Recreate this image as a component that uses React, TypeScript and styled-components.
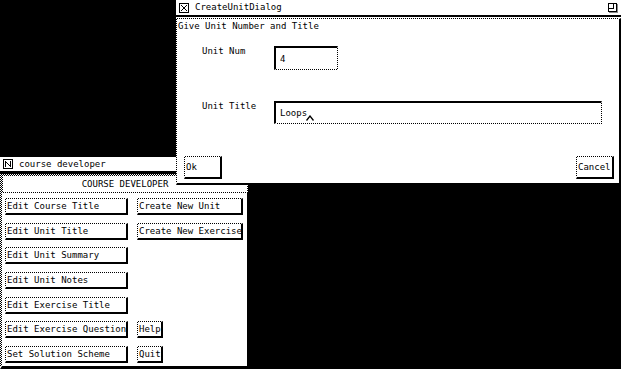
import React from 'react';
import styled, { createGlobalStyle } from 'styled-components';

const GlobalStyle = createGlobalStyle`
  html, body {
    margin: 0;
    padding: 0;
    background: #000;
  }
  body {
    font-family: "DejaVu Sans Mono", "Liberation Mono", monospace;
    font-size: 9px;
    color: #000;
  }
`;

// 1px checkerboard, the way the old mono server draws a light shadow
const dither = 'repeating-conic-gradient(#000 0% 25%, #fff 0% 50%) 0 0 / 2px 2px';

const Desktop = styled.div`
  position: relative;
  width: 621px;
  height: 369px;
  overflow: hidden;
  background: #000;
`;

const Window = styled.section<{ $x: number; $y: number; $w: number; $h: number }>`
  position: absolute;
  left: ${(p) => p.$x}px;
  top: ${(p) => p.$y}px;
  width: ${(p) => p.$w}px;
  height: ${(p) => p.$h}px;
  display: flex;
  flex-direction: column;
  background: #fff;
`;

const TitleBar = styled.header<{ $h: number }>`
  height: ${(p) => p.$h}px;
  flex: none;
  display: flex;
  align-items: center;
  gap: 6px;
  padding: 0 3px;
  background: #fff;
  line-height: 11px;
  white-space: nowrap;
`;

const TitleText = styled.span`
  flex: 1;
`;

const TitleRule = styled.div<{ $h: number }>`
  height: ${(p) => p.$h}px;
  flex: none;
  background: #000;
`;

const DitherBox = styled.div`
  border: 1px solid transparent;
  background: linear-gradient(#fff, #fff) padding-box, ${dither} border-box;
`;

const DialogBody = styled(DitherBox)`
  flex: 1;
  margin-top: 1px;
  border-right: 2px solid #000;
  border-bottom: 2px solid #000;
  display: flex;
  flex-direction: column;
  padding: 2px 0 4px 1px;
`;

const Prompt = styled.div`
  line-height: 11px;
`;

const Form = styled.div`
  display: grid;
  grid-template-columns: 72px auto;
  grid-template-rows: 24px 23px;
  row-gap: 31px;
  margin: 14px 0 0 24px;
`;

const Label = styled.div`
  line-height: 11px;
`;

const Field = styled.div<{ $w: number }>`
  width: ${(p) => p.$w}px;
  box-sizing: border-box;
  display: flex;
  align-items: center;
  padding-left: 4px;
  padding-top: 1px;
  line-height: 11px;
  border: 1px solid transparent;
  border-top: 2px solid #000;
  border-left: 2px solid #000;
  background: linear-gradient(#fff, #fff) padding-box, ${dither} border-box;
`;

const Caret = styled.svg`
  margin-left: -1px;
  margin-top: 8px;
`;

const Actions = styled.div`
  margin-top: auto;
  display: flex;
  justify-content: space-between;
  padding: 0 5px 0 6px;
`;

const Button = styled.div<{ $w: number; $h: number }>`
  width: ${(p) => p.$w}px;
  height: ${(p) => p.$h}px;
  box-sizing: border-box;
  display: flex;
  align-items: center;
  padding: 1px 0 0 1px;
  line-height: 11px;
  white-space: nowrap;
  overflow: hidden;
  border: 1px solid transparent;
  border-right: 2px solid #000;
  border-bottom: 2px solid #000;
  background: linear-gradient(#fff, #fff) padding-box, ${dither} border-box;
`;

const CourseBody = styled.div`
  flex: 1;
  display: flex;
  flex-direction: column;
  border-left: 2px solid transparent;
  border-bottom: 3px solid #000;
  background: linear-gradient(#fff, #fff) padding-box, ${dither} border-box;
`;

const Banner = styled(DitherBox)`
  height: 19px;
  box-sizing: border-box;
  display: flex;
  align-items: center;
  justify-content: center;
  border-width: 2px 1px 1px 1px;
  line-height: 11px;
  padding-top: 1px;
`;

const Panel = styled.div`
  flex: 1;
  display: grid;
  grid-template-columns: 123px 106px;
  grid-auto-rows: 17px;
  column-gap: 9px;
  row-gap: 7.7px;
  padding: 5px 0 0 3px;
  border-right: 1px solid #000;
`;

const Cell = styled.div<{ $col: number; $row: number }>`
  grid-column: ${(p) => p.$col};
  grid-row: ${(p) => p.$row};
`;

const BoxIcon = ({ kind }: { kind: 'x' | 'n' }) => (
  <svg width="10" height="10" viewBox="0 0 10 10" shapeRendering="crispEdges">
    <rect x="0.5" y="0.5" width="9" height="9" fill="none" stroke="#000" />
    {kind === 'x' ? (
      <path d="M2 2 L8 8 M8 2 L2 8" stroke="#000" fill="none" />
    ) : (
      <path d="M2.5 2 V8 M7.5 2 V8 M2 2 L8 8" stroke="#000" fill="none" />
    )}
  </svg>
);

const ResizeIcon = () => (
  <svg width="10" height="10" viewBox="0 0 10 10" shapeRendering="crispEdges">
    <rect x="0.5" y="0.5" width="8" height="8" fill="none" stroke="#000" />
    <path d="M5.5 0.5 V5.5 H0.5" stroke="#000" fill="none" />
    <path d="M9.5 1 V9.5 H1" stroke="#888" fill="none" />
  </svg>
);

const courseButtons = [
  { col: 1, row: 1, label: 'Edit Course Title', w: 123 },
  { col: 2, row: 1, label: 'Create New Unit', w: 106 },
  { col: 1, row: 2, label: 'Edit Unit Title', w: 123 },
  { col: 2, row: 2, label: 'Create New Exercise', w: 106 },
  { col: 1, row: 3, label: 'Edit Unit Summary', w: 123 },
  { col: 1, row: 4, label: 'Edit Unit Notes', w: 123 },
  { col: 1, row: 5, label: 'Edit Exercise Title', w: 123 },
  { col: 1, row: 6, label: 'Edit Exercise Question', w: 123 },
  { col: 2, row: 6, label: 'Help', w: 26 },
  { col: 1, row: 7, label: 'Set Solution Scheme', w: 123 },
  { col: 2, row: 7, label: 'Quit', w: 26 },
];

const App = () => {
  return (
    <>
      <GlobalStyle />
      <Desktop>
        <Window $x={0} $y={157} $w={248} $h={212}>
          <TitleBar $h={14}>
            <BoxIcon kind="n" />
            <TitleText>course developer</TitleText>
          </TitleBar>
          <TitleRule $h={3} />
          <CourseBody>
            <Banner>COURSE DEVELOPER</Banner>
            <Panel>
              {courseButtons.map((b) => (
                <Cell key={b.label} $col={b.col} $row={b.row}>
                  <Button $w={b.w} $h={17}>{b.label}</Button>
                </Cell>
              ))}
            </Panel>
          </CourseBody>
        </Window>

        <Window $x={176} $y={0} $w={445} $h={185}>
          <TitleBar $h={15}>
            <BoxIcon kind="x" />
            <TitleText>CreateUnitDialog</TitleText>
            <ResizeIcon />
          </TitleBar>
          <TitleRule $h={2} />
          <DialogBody>
            <Prompt>Give Unit Number and Title</Prompt>
            <Form>
              <Label>Unit Num</Label>
              <Field $w={64}>4</Field>
              <Label>Unit Title</Label>
              <Field $w={328}>
                Loops
                <Caret width="8" height="6" viewBox="0 0 8 6">
                  <path d="M0.5 5.5 L4 1 L7.5 5.5" stroke="#000" strokeWidth="1.3" fill="none" />
                </Caret>
              </Field>
            </Form>
            <Actions>
              <Button $w={38} $h={23}>Ok</Button>
              <Button $w={38} $h={23}>Cancel</Button>
            </Actions>
          </DialogBody>
        </Window>
      </Desktop>
    </>
  );
};

export default App;
